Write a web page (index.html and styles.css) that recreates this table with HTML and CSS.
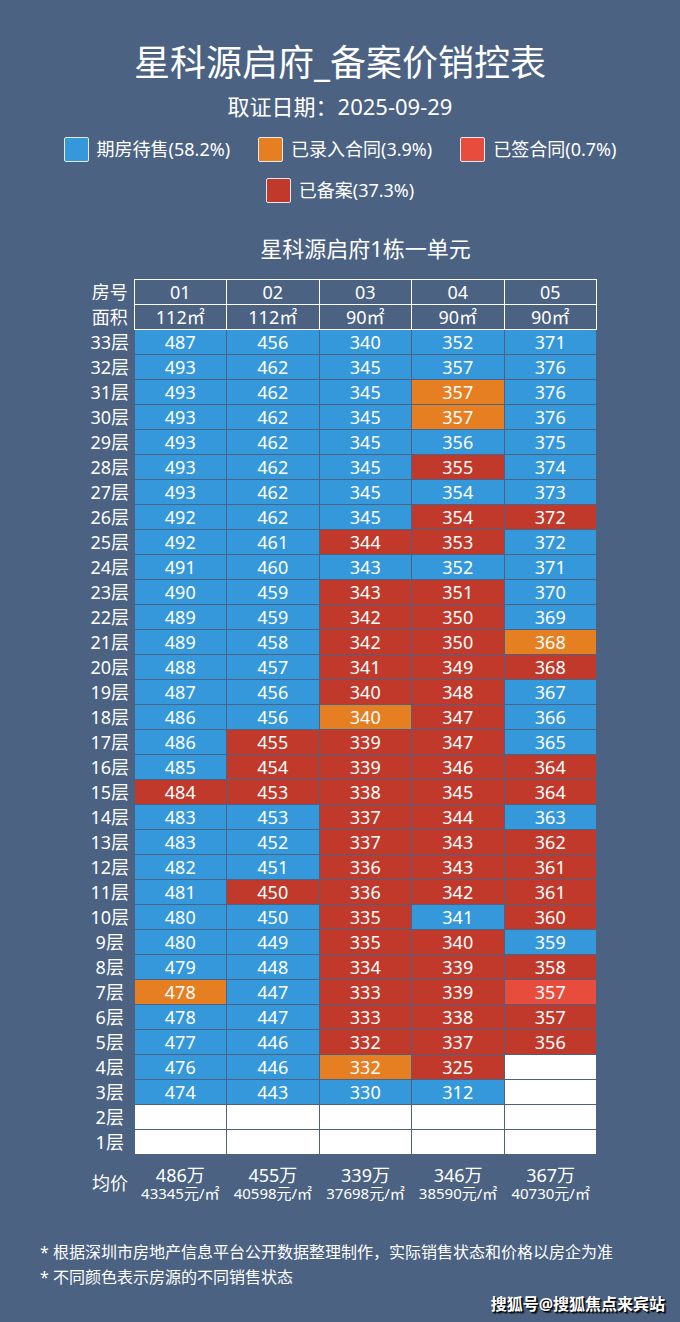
FILE: index.html
```html
<!DOCTYPE html>
<html lang="zh-CN">
<head>
<meta charset="utf-8">
<title>星科源启府_备案价销控表</title>
<link rel="stylesheet" href="styles.css">
</head>
<body>
<div class="page">
  <h1 class="title">星科源启府_备案价销控表</h1>
  <div class="date">取证日期：2025-09-29</div>

  <div class="legend">
    <div class="legend-row">
      <div class="legend-item"><span class="swatch b"></span><span>期房待售(58.2%)</span></div>
      <div class="legend-item"><span class="swatch o"></span><span>已录入合同(3.9%)</span></div>
      <div class="legend-item"><span class="swatch l"></span><span>已签合同(0.7%)</span></div>
    </div>
    <div class="legend-row">
      <div class="legend-item"><span class="swatch r"></span><span>已备案(37.3%)</span></div>
    </div>
  </div>

  <h2 class="building">星科源启府1栋一单元</h2>

  <table class="grid">
    <colgroup><col class="c-label"><col><col><col><col><col></colgroup>
    <tr class="head"><th>房号</th><td>01</td><td>02</td><td>03</td><td>04</td><td>05</td></tr>
    <tr class="head"><th>面积</th><td>112㎡</td><td>112㎡</td><td>90㎡</td><td>90㎡</td><td>90㎡</td></tr>
    <tr><th>33层</th><td class="b">487</td><td class="b">456</td><td class="b">340</td><td class="b">352</td><td class="b">371</td></tr>
    <tr><th>32层</th><td class="b">493</td><td class="b">462</td><td class="b">345</td><td class="b">357</td><td class="b">376</td></tr>
    <tr><th>31层</th><td class="b">493</td><td class="b">462</td><td class="b">345</td><td class="o">357</td><td class="b">376</td></tr>
    <tr><th>30层</th><td class="b">493</td><td class="b">462</td><td class="b">345</td><td class="o">357</td><td class="b">376</td></tr>
    <tr><th>29层</th><td class="b">493</td><td class="b">462</td><td class="b">345</td><td class="b">356</td><td class="b">375</td></tr>
    <tr><th>28层</th><td class="b">493</td><td class="b">462</td><td class="b">345</td><td class="r">355</td><td class="b">374</td></tr>
    <tr><th>27层</th><td class="b">493</td><td class="b">462</td><td class="b">345</td><td class="b">354</td><td class="b">373</td></tr>
    <tr><th>26层</th><td class="b">492</td><td class="b">462</td><td class="b">345</td><td class="r">354</td><td class="r">372</td></tr>
    <tr><th>25层</th><td class="b">492</td><td class="b">461</td><td class="r">344</td><td class="r">353</td><td class="b">372</td></tr>
    <tr><th>24层</th><td class="b">491</td><td class="b">460</td><td class="b">343</td><td class="b">352</td><td class="b">371</td></tr>
    <tr><th>23层</th><td class="b">490</td><td class="b">459</td><td class="r">343</td><td class="r">351</td><td class="b">370</td></tr>
    <tr><th>22层</th><td class="b">489</td><td class="b">459</td><td class="r">342</td><td class="r">350</td><td class="b">369</td></tr>
    <tr><th>21层</th><td class="b">489</td><td class="b">458</td><td class="r">342</td><td class="r">350</td><td class="o">368</td></tr>
    <tr><th>20层</th><td class="b">488</td><td class="b">457</td><td class="r">341</td><td class="r">349</td><td class="r">368</td></tr>
    <tr><th>19层</th><td class="b">487</td><td class="b">456</td><td class="r">340</td><td class="r">348</td><td class="b">367</td></tr>
    <tr><th>18层</th><td class="b">486</td><td class="b">456</td><td class="o">340</td><td class="r">347</td><td class="b">366</td></tr>
    <tr><th>17层</th><td class="b">486</td><td class="r">455</td><td class="r">339</td><td class="r">347</td><td class="b">365</td></tr>
    <tr><th>16层</th><td class="b">485</td><td class="r">454</td><td class="r">339</td><td class="r">346</td><td class="r">364</td></tr>
    <tr><th>15层</th><td class="r">484</td><td class="r">453</td><td class="r">338</td><td class="r">345</td><td class="r">364</td></tr>
    <tr><th>14层</th><td class="b">483</td><td class="b">453</td><td class="r">337</td><td class="r">344</td><td class="b">363</td></tr>
    <tr><th>13层</th><td class="b">483</td><td class="b">452</td><td class="r">337</td><td class="r">343</td><td class="r">362</td></tr>
    <tr><th>12层</th><td class="b">482</td><td class="b">451</td><td class="r">336</td><td class="r">343</td><td class="r">361</td></tr>
    <tr><th>11层</th><td class="b">481</td><td class="r">450</td><td class="r">336</td><td class="r">342</td><td class="r">361</td></tr>
    <tr><th>10层</th><td class="b">480</td><td class="b">450</td><td class="r">335</td><td class="b">341</td><td class="r">360</td></tr>
    <tr><th>9层</th><td class="b">480</td><td class="b">449</td><td class="r">335</td><td class="r">340</td><td class="b">359</td></tr>
    <tr><th>8层</th><td class="b">479</td><td class="b">448</td><td class="r">334</td><td class="r">339</td><td class="r">358</td></tr>
    <tr><th>7层</th><td class="o">478</td><td class="b">447</td><td class="r">333</td><td class="r">339</td><td class="l">357</td></tr>
    <tr><th>6层</th><td class="b">478</td><td class="b">447</td><td class="r">333</td><td class="r">338</td><td class="r">357</td></tr>
    <tr><th>5层</th><td class="b">477</td><td class="b">446</td><td class="r">332</td><td class="r">337</td><td class="r">356</td></tr>
    <tr><th>4层</th><td class="b">476</td><td class="b">446</td><td class="o">332</td><td class="r">325</td><td class="w"></td></tr>
    <tr><th>3层</th><td class="b">474</td><td class="b">443</td><td class="b">330</td><td class="b">312</td><td class="w"></td></tr>
    <tr><th>2层</th><td class="w"></td><td class="w"></td><td class="w"></td><td class="w"></td><td class="w"></td></tr>
    <tr><th>1层</th><td class="w"></td><td class="w"></td><td class="w"></td><td class="w"></td><td class="w"></td></tr>
  </table>

  <div class="avg">
    <div class="avg-label">均价</div>
    <div class="avg-cell"><div class="avg-total">486万</div><div class="avg-unit">43345元/㎡</div></div>
    <div class="avg-cell"><div class="avg-total">455万</div><div class="avg-unit">40598元/㎡</div></div>
    <div class="avg-cell"><div class="avg-total">339万</div><div class="avg-unit">37698元/㎡</div></div>
    <div class="avg-cell"><div class="avg-total">346万</div><div class="avg-unit">38590元/㎡</div></div>
    <div class="avg-cell"><div class="avg-total">367万</div><div class="avg-unit">40730元/㎡</div></div>
  </div>

  <div class="notes">
    <p>* 根据深圳市房地产信息平台公开数据整理制作，实际销售状态和价格以房企为准</p>
    <p>* 不同颜色表示房源的不同销售状态</p>
  </div>

  <div class="mark">搜狐号@搜狐焦点来宾站</div>
</div>
</body>
</html>
```

FILE: styles.css
```css
html, body {
  margin: 0;
  padding: 0;
  background: #4b6283;
}

body {
  color: #ffffff;
  font-family: "Noto Sans", "Noto Sans CJK SC", sans-serif;
}

.page {
  width: 680px;
  height: 1322px;
  overflow: hidden;
  padding-top: 41px;
  box-sizing: border-box;
}

.title {
  margin: 0;
  font-size: 36px;
  line-height: 44px;
  font-weight: 400;
  text-align: center;
}

.date {
  margin-top: 6px;
  font-size: 22px;
  line-height: 30px;
  text-align: center;
}

.legend {
  margin-top: 16px;
  display: flex;
  flex-direction: column;
  gap: 16px;
}

.legend-row {
  display: flex;
  justify-content: center;
  gap: 28px;
}

.legend-item {
  display: flex;
  align-items: center;
  gap: 8px;
  height: 25px;
  font-size: 18px;
  line-height: 25px;
}

.swatch {
  width: 25px;
  height: 25px;
  box-sizing: border-box;
  border: 1px solid #e6e9ee;
  border-radius: 2px;
}

.b { background: #3498db; }
.o { background: #e67e22; }
.l { background: #e74c3c; }
.r { background: #c0392b; }
.w { background: #ffffff; }

.building {
  margin: 30px 0 0 134px;
  width: 463px;
  font-size: 22px;
  line-height: 30px;
  font-weight: 400;
  text-align: center;
}

.grid {
  margin: 16px 0 0 86px;
  width: 511px;
  table-layout: fixed;
  border-collapse: collapse;
  font-size: 18px;
}

.c-label {
  width: 48px;
}

.grid tr {
  height: 25px;
}

.grid th {
  padding: 0;
  font-weight: 400;
  text-align: center;
  line-height: 24px;
  border: none;
}

.grid td {
  padding: 0;
  text-align: center;
  line-height: 24px;
  border: 1px solid #4b6283;
}

.grid .head td {
  border: 1px solid #ffffff;
}

.avg {
  margin: 10px 0 0 86px;
  width: 511px;
  display: grid;
  grid-template-columns: 48px repeat(5, 1fr);
  align-items: center;
}

.avg-label {
  font-size: 18px;
  line-height: 36px;
  text-align: center;
}

.avg-cell {
  text-align: center;
}

.avg-total {
  font-size: 18px;
  line-height: 20px;
}

.avg-unit {
  font-size: 15px;
  line-height: 16px;
}

.notes {
  margin: 39px 0 0 40px;
  font-size: 16px;
  line-height: 25px;
}

.notes p {
  margin: 0;
}

.mark {
  margin-top: 3px;
  padding-right: 15px;
  text-align: right;
  font-size: 16px;
  line-height: 22px;
  font-weight: 700;
  text-shadow: 1px 1px 0 #000, 2px 2px 1px rgba(0, 0, 0, 0.7);
}
```
